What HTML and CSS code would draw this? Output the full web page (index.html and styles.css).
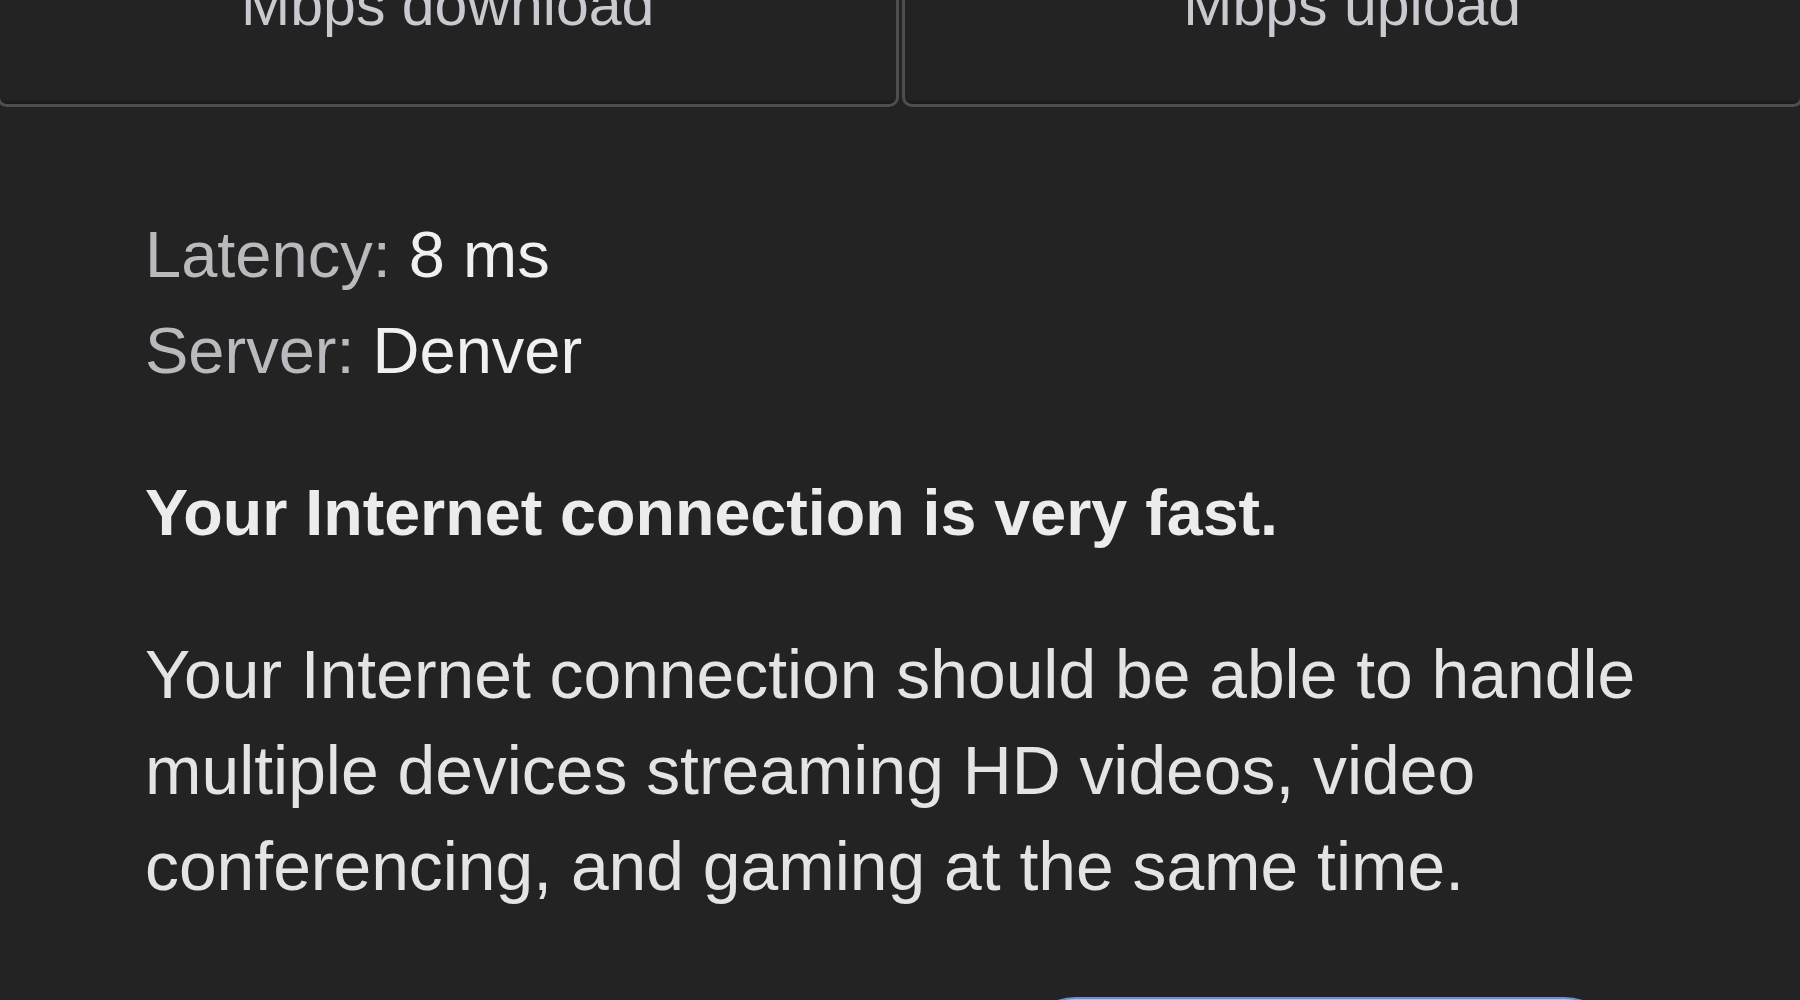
FILE: index.html
```html
<!DOCTYPE html>
<html lang="en">
<head>
<meta charset="utf-8">
<title>Speed test result</title>
<link rel="stylesheet" href="styles.css">
</head>
<body>
<main class="page">
  <section class="cards">
    <div class="card card-left">
      <div class="card-label">Mbps download</div>
    </div>
    <div class="card card-right">
      <div class="card-label">Mbps upload</div>
    </div>
  </section>

  <section class="details">
    <div class="stat"><span class="stat-label">Latency:</span> <span class="stat-value">8 ms</span></div>
    <div class="stat"><span class="stat-label">Server:</span> <span class="stat-value">Denver</span></div>
  </section>

  <h1 class="verdict">Your Internet connection is very fast.</h1>

  <p class="summary">Your Internet connection should be able to handle multiple devices streaming HD videos, video conferencing, and gaming at the same time.</p>

  <div class="actions">
    <button class="primary-btn" type="button" aria-label="Test again"></button>
  </div>
</main>
</body>
</html>
```

FILE: styles.css
```css
html, body {
  margin: 0;
  padding: 0;
  height: 1000px;
  overflow: hidden;
  background: #232323;
}

body {
  font-family: "Liberation Sans", Arial, Helvetica, sans-serif;
  color: #e8e8e8;
}

.page {
  display: flex;
  flex-direction: column;
}

.cards {
  display: grid;
  grid-template-columns: 1fr 1fr;
  gap: 3px;
  margin: -30px -3px 0;
}

.card {
  background: #232323;
  border: 3px solid #4e4e4e;
  border-top: none;
  border-radius: 0 0 10px 10px;
  padding: 0 0 64px;
  text-align: center;
  box-shadow: inset 0 -12px 2px -9px #1c1c1c;
}

.card-label {
  font-size: 59px;
  line-height: 70px;
  color: #c9c9cf;
}

.details {
  margin-top: 100px;
  padding: 0 145px;
}

.stat {
  font-size: 65px;
  line-height: 96px;
  white-space: nowrap;
}

.stat-label {
  color: #b9b9be;
}

.stat-value {
  color: #f0f0f0;
}

.verdict {
  margin: 66px 0 0;
  padding: 0 145px;
  font-size: 64.6px;
  line-height: 96px;
  font-weight: 700;
  color: #ececec;
}

.summary {
  margin: 66px 0 0;
  padding: 0 100px 0 145px;
  font-size: 67.8px;
  line-height: 96px;
  color: #e4e4e6;
}

.actions {
  display: flex;
  justify-content: flex-end;
  padding-right: 176px;
  margin-top: 82px;
}

.primary-btn {
  width: 608px;
  height: 120px;
  border: none;
  border-top: 2px solid #6f8fca;
  border-radius: 60px;
  background: #a9c5f4;
  padding: 0;
}
```
